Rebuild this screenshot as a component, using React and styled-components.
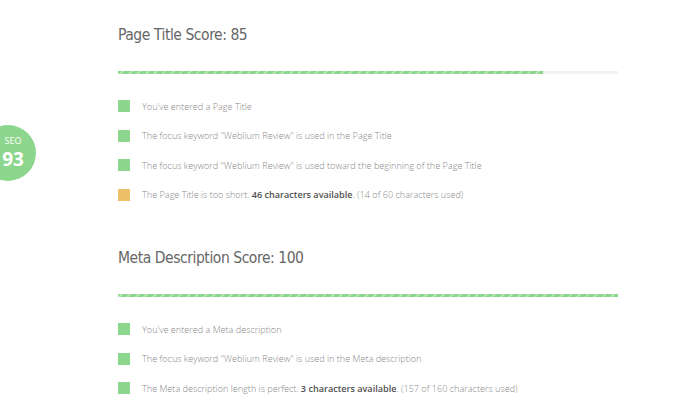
import React from "react";
import styled, { createGlobalStyle } from "styled-components";

const Global = createGlobalStyle`
  html, body { margin: 0; padding: 0; background: #fff; }
  body { font-family: "Open Sans", sans-serif; }
`;

const Page = styled.div`
  position: relative;
  width: 700px;
  height: 419px;
  overflow: hidden;
  background: #fff;
`;

const Content = styled.div`
  width: 500px;
  padding: 23px 0 0 118px;
`;

const Section = styled.section`
  & + & { margin-top: 36.75px; }
`;

const Heading = styled.h2`
  margin: 0;
  font-family: "DejaVu Sans Condensed", "DejaVu Sans", sans-serif;
  font-stretch: condensed;
  font-weight: 400;
  font-size: 15.5px;
  line-height: 24px;
  color: #666;
  letter-spacing: -0.45px;
`;

const Track = styled.div`
  margin-top: 24px;
  height: 3px;
  background: #f2f2f2;
`;

const Fill = styled.div`
  height: 100%;
  background: repeating-linear-gradient(
    -45deg,
    #8cd58c 0px,
    #8cd58c 4px,
    #b2e5b2 4px,
    #b2e5b2 6px
  );
`;

const List = styled.ul`
  list-style: none;
  margin: 17.25px 0 0;
  padding: 0;
`;

const Item = styled.li`
  display: flex;
  align-items: center;
  height: 29.5px;
  font-size: 9.1px;
  font-weight: 300;
  color: #888;
  white-space: nowrap;
`;

const Square = styled.span`
  flex: none;
  width: 12px;
  height: 12px;
  margin-right: 12px;
  background: ${(p) => (p.$warn ? "#ecc066" : "#8dd68d")};
`;

const Strong = styled.b`
  font-weight: 600;
  color: #4f4f4f;
`;

const Badge = styled.div`
  position: absolute;
  left: -20px;
  top: 125px;
  width: 56px;
  height: 56px;
  border-radius: 50%;
  background: #8dd68d;
  color: #fff;
  display: flex;
  flex-direction: column;
  align-items: center;
  justify-content: center;
  padding-left: 10px;
  box-sizing: border-box;
  font-family: "Open Sans", sans-serif;
`;

const BadgeLabel = styled.span`
  font-size: 9px;
  line-height: 12px;
  font-weight: 400;
`;

const BadgeValue = styled.span`
  font-size: 19px;
  line-height: 24px;
  font-weight: 700;
`;

const sections = [
  {
    title: "Page Title Score: 85",
    score: 85,
    items: [
      { text: "You've entered a Page Title" },
      { text: 'The focus keyword "Weblium Review" is used in the Page Title' },
      {
        text: 'The focus keyword "Weblium Review" is used toward the beginning of the Page Title',
      },
      {
        warn: true,
        pre: "The Page Title is too short. ",
        bold: "46 characters available",
        post: ". (14 of 60 characters used)",
      },
    ],
  },
  {
    title: "Meta Description Score: 100",
    score: 100,
    items: [
      { text: "You've entered a Meta description" },
      { text: 'The focus keyword "Weblium Review" is used in the Meta description' },
      {
        pre: "The Meta description length is perfect. ",
        bold: "3 characters available",
        post: ". (157 of 160 characters used)",
      },
    ],
  },
];

export default function App() {
  return (
    <>
      <Global />
      <Page>
        <Badge>
          <BadgeLabel>SEO</BadgeLabel>
          <BadgeValue>93</BadgeValue>
        </Badge>
        <Content>
          {sections.map((s) => (
            <Section key={s.title}>
              <Heading>{s.title}</Heading>
              <Track>
                <Fill style={{ width: `${s.score}%` }} />
              </Track>
              <List>
                {s.items.map((it, i) => (
                  <Item key={i}>
                    <Square $warn={it.warn} />
                    <span>
                      {it.text}
                      {it.pre}
                      {it.bold && <Strong>{it.bold}</Strong>}
                      {it.post}
                    </span>
                  </Item>
                ))}
              </List>
            </Section>
          ))}
        </Content>
      </Page>
    </>
  );
}
